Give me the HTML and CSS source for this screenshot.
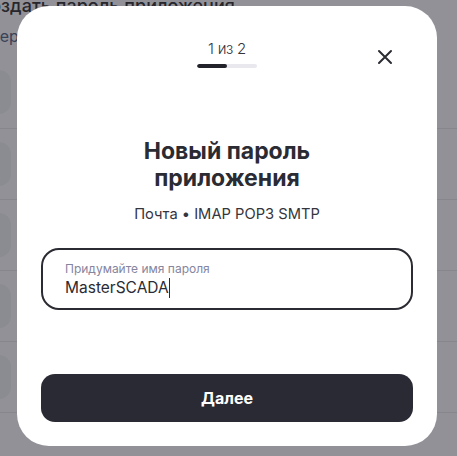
FILE: index.html
```html
<!DOCTYPE html>
<html lang="ru">
<head>
  <meta charset="UTF-8">
  <meta name="viewport" content="width=device-width, initial-scale=1.0">
  <title>Новый пароль приложения</title>
  <link rel="stylesheet" href="styles.css">
</head>
<body>
  <div class="page">
    <h1 class="page-title">Создать пароль приложения</h1>
    <p class="page-sub">Выберите тип приложения</p>
    <ul class="app-list">
      <li class="app-row"><span class="app-icon"></span></li>
      <li class="app-row"><span class="app-icon"></span></li>
      <li class="app-row"><span class="app-icon"></span></li>
      <li class="app-row"><span class="app-icon"></span></li>
      <li class="app-row"><span class="app-icon"></span></li>
    </ul>
  </div>

  <div class="overlay">
    <div class="modal">
      <div class="modal-head">
        <div class="steps">
          <span class="steps-text">1 из 2</span>
          <span class="steps-bar"><span class="steps-fill"></span></span>
        </div>
        <button class="close" aria-label="Закрыть">
          <svg width="16" height="16" viewBox="0 0 16 16">
            <path d="M2 2L14 14M14 2L2 14" stroke="#2b2b33" stroke-width="2" stroke-linecap="round"/>
          </svg>
        </button>
      </div>

      <h2 class="modal-title">Новый пароль<br>приложения</h2>
      <p class="modal-sub">Почта • IMAP POP3 SMTP</p>

      <label class="field">
        <span class="field-label">Придумайте имя пароля</span>
        <span class="field-value">MasterSCADA<span class="caret"></span></span>
      </label>

      <button class="next">Далее</button>
    </div>
  </div>
</body>
</html>
```

FILE: styles.css
```css
body {
  margin: 0;
  background-color: #919197;
  font-family: Inter, "Noto Sans", sans-serif;
  overflow: hidden;
  height: 456px;
}
.page {
  position: relative;
}
.page-title {
  margin: -5px 0 0 -23px;
  font-size: 18px;
  font-weight: 500;
  line-height: 22px;
  color: #26262c;
  white-space: nowrap;
}
.page-sub {
  margin: 9px 0 0 -32px;
  font-size: 16px;
  line-height: 20px;
  color: #394257;
  white-space: nowrap;
}
.app-list {
  list-style: none;
  margin: 0;
  padding: 0;
}
.app-row {
  height: 70px;
  border-bottom: 1px solid #86868c;
  display: flex;
  align-items: center;
}
.app-row:first-child {
  height: 82px;
  align-items: flex-end;
}
.app-icon {
  width: 44px;
  height: 44px;
  margin-left: -33px;
  border-radius: 12px;
  background-color: #8b8b92;
}
.app-row:first-child .app-icon {
  margin-bottom: 14px;
}

.overlay {
  position: absolute;
  top: 0;
  left: 0;
  right: 0;
  bottom: 0;
}
.modal {
  position: absolute;
  top: 6px;
  left: 17px;
  width: 420px;
  height: 440px;
  box-sizing: border-box;
  background-color: #fff;
  border-radius: 32px;
  padding: 0 24px 24px;
  display: flex;
  flex-direction: column;
  align-items: center;
}
.modal-head {
  position: relative;
  width: 100%;
  display: flex;
  justify-content: center;
  padding-top: 34px;
}
.steps {
  display: flex;
  flex-direction: column;
  align-items: center;
  gap: 6px;
}
.steps-text {
  font-size: 15px;
  line-height: 18px;
  font-weight: 300;
  color: #35353d;
  letter-spacing: -0.3px;
}
.steps-bar {
  display: block;
  width: 60px;
  height: 4px;
  border-radius: 2px;
  background-color: #e8e8ee;
  overflow: hidden;
}
.steps-fill {
  display: block;
  width: 30px;
  height: 4px;
  border-radius: 2px;
  background-color: #22222a;
}
.close {
  position: absolute;
  top: 39px;
  right: 16px;
  width: 24px;
  height: 24px;
  padding: 0;
  border: none;
  background: none;
  display: flex;
  align-items: center;
  justify-content: center;
}
.modal-title {
  margin: 70px 0 0;
  font-size: 23px;
  line-height: 27px;
  font-weight: 700;
  text-align: center;
  color: #2b2b33;
}
.modal-sub {
  margin: 13px 0 0;
  font-size: 14.7px;
  line-height: 18px;
  color: #35353d;
}
.field {
  margin-top: 25px;
  width: 372px;
  height: 62px;
  box-sizing: border-box;
  border: 2px solid #2b2b33;
  border-radius: 18px;
  padding: 11px 22px 0;
  display: flex;
  flex-direction: column;
}
.field-label {
  font-size: 12px;
  line-height: 16px;
  color: #8585a0;
}
.field-value {
  font-size: 15.5px;
  line-height: 22px;
  color: #2b2b33;
  display: flex;
  align-items: center;
}
.caret {
  display: inline-block;
  width: 1px;
  height: 20px;
  background-color: #2b2b33;
}
.next {
  margin-top: auto;
  width: 372px;
  height: 48px;
  border: none;
  border-radius: 14px;
  background-color: #2a2a35;
  color: #fff;
  font-family: Inter, "Noto Sans", sans-serif;
  font-size: 16px;
  font-weight: 700;
}
```
